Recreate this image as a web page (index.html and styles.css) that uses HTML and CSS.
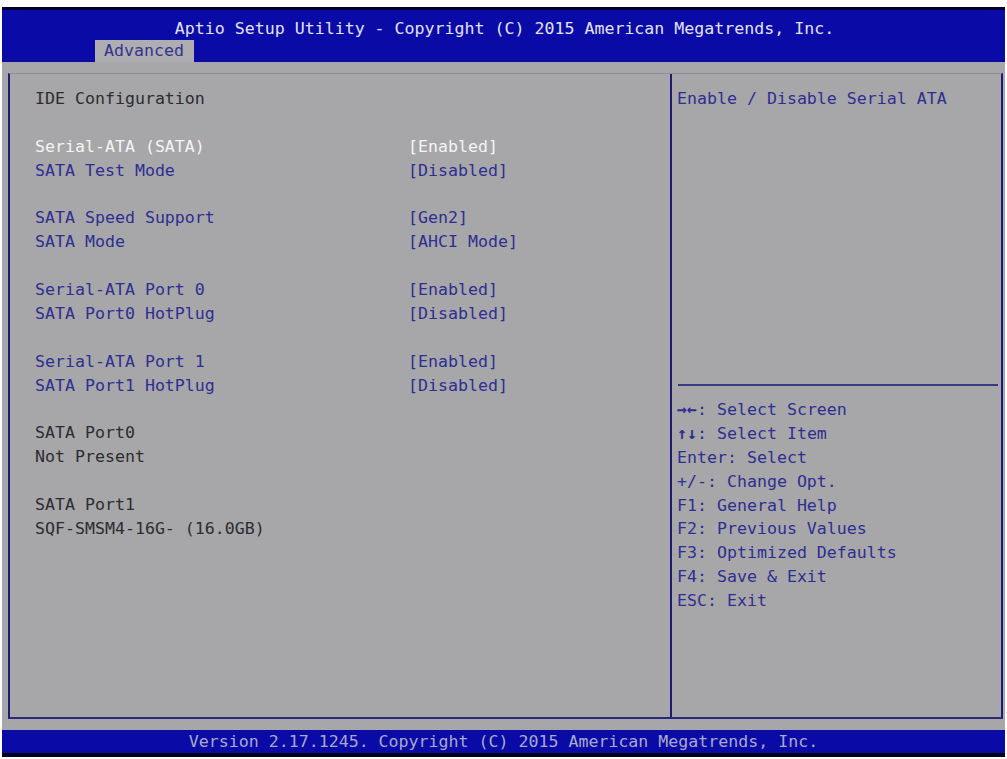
FILE: index.html
```html
<!DOCTYPE html>
<html>
<head>
<meta charset="utf-8">
<link rel="stylesheet" href="styles.css">
</head>
<body>
<div class="screen">
  <header class="header">
    <div class="title">Aptio Setup Utility - Copyright (C) 2015 American Megatrends, Inc.</div>
    <div class="tabs"><span class="tab">Advanced</span></div>
  </header>
  <main class="main">
    <div class="frame">
      <section class="left">
        <div class="row static"><span class="label">IDE Configuration</span></div>
        <div class="gap"></div>
        <div class="row selected"><span class="label">Serial-ATA (SATA)</span><span class="value">[Enabled]</span></div>
        <div class="row"><span class="label">SATA Test Mode</span><span class="value">[Disabled]</span></div>
        <div class="gap"></div>
        <div class="row"><span class="label">SATA Speed Support</span><span class="value">[Gen2]</span></div>
        <div class="row"><span class="label">SATA Mode</span><span class="value">[AHCI Mode]</span></div>
        <div class="gap"></div>
        <div class="row"><span class="label">Serial-ATA Port 0</span><span class="value">[Enabled]</span></div>
        <div class="row"><span class="label">SATA Port0 HotPlug</span><span class="value">[Disabled]</span></div>
        <div class="gap"></div>
        <div class="row"><span class="label">Serial-ATA Port 1</span><span class="value">[Enabled]</span></div>
        <div class="row"><span class="label">SATA Port1 HotPlug</span><span class="value">[Disabled]</span></div>
        <div class="gap"></div>
        <div class="row static"><span class="label">SATA Port0</span></div>
        <div class="row static"><span class="label">Not Present</span></div>
        <div class="gap"></div>
        <div class="row static"><span class="label">SATA Port1</span></div>
        <div class="row static"><span class="label">SQF-SMSM4-16G- (16.0GB)</span></div>
      </section>
      <aside class="right">
        <div class="help">Enable / Disable Serial ATA</div>
        <div class="divider"></div>
        <ul class="keys">
          <li><span class="arrows">→←</span>: Select Screen</li>
          <li><span class="arrows">↑↓</span>: Select Item</li>
          <li>Enter: Select</li>
          <li>+/-: Change Opt.</li>
          <li>F1: General Help</li>
          <li>F2: Previous Values</li>
          <li>F3: Optimized Defaults</li>
          <li>F4: Save &amp; Exit</li>
          <li>ESC: Exit</li>
        </ul>
      </aside>
    </div>
  </main>
  <footer class="footer"><span class="version">Version 2.17.1245. Copyright (C) 2015 American Megatrends, Inc.</span></footer>
</div>
</body>
</html>
```

FILE: styles.css
```css
* { box-sizing: border-box; }
html, body { margin: 0; padding: 0; background: #ffffff; }
body {
  padding: 7px 2px 0 2px;
  font-family: "DejaVu Sans Mono", "Liberation Mono", monospace;
  font-size: 16.6px;
}
.screen {
  width: 1003px;
  height: 750px;
  background: #a7a7a9;
  display: flex;
  flex-direction: column;
}
.header {
  height: 55px;
  background: #0a0aa6;
  border-top: 3px solid #000030;
  padding-top: 8px;
  display: flex;
  flex-direction: column;
}
.title {
  height: 22px;
  line-height: 22px;
  text-align: center;
  color: #e2e2f0;
  padding-left: 2px;
}
.tabs {
  height: 22px;
  padding-left: 93px;
  display: flex;
}
.tab {
  background: #aeaeb2;
  color: #34348c;
  line-height: 22px;
  padding: 0 10px 0 9px;
}
.main {
  flex: 1;
  padding: 11px 2px 11px 6px;
  display: flex;
}
.frame {
  flex: 1;
  display: flex;
  border-left: 2px solid #1c1c78;
  border-right: 2px solid #1c1c78;
  border-bottom: 2px solid #2a2a7a;
  border-top: 1px solid #8e8e98;
}
.left {
  width: 662px;
  border-right: 2px solid #1c1c78;
  padding: 13px 0 0 25px;
}
.row {
  display: flex;
  height: 23.9px;
  line-height: 23.9px;
  color: #2e2e92;
}
.row .label { width: 373px; }
.row.selected { color: #f4f4f6; }
.row.static { color: #2c2c30; }
.gap { height: 23.9px; }
.right {
  flex: 1;
  display: flex;
  flex-direction: column;
  color: #2e2e92;
}
.help {
  height: 310px;
  padding: 13px 0 0 5px;
  line-height: 23.9px;
}
.divider {
  height: 2px;
  margin: 0 3px 0 6px;
  background: #3a3a84;
}
.keys {
  list-style: none;
  margin: 0;
  padding: 12px 0 0 5px;
}
.keys li {
  height: 23.9px;
  line-height: 23.9px;
}
.arrows {
  font-weight: bold;
}
.footer {
  height: 27px;
  background: #0a0aa6;
  border-bottom: 4px solid #000018;
  display: flex;
  justify-content: center;
  align-items: center;
}
.version {
  color: #a9a9cc;
  white-space: nowrap;
  line-height: 22px;
}
```
